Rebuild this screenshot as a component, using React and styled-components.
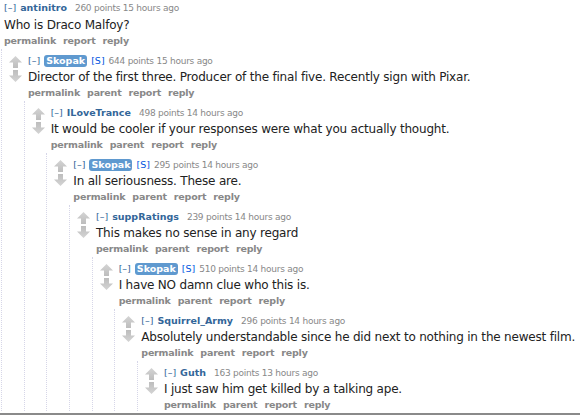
import React from "react";
import styled, { createGlobalStyle } from "styled-components";

const Global = createGlobalStyle`
  html, body { margin: 0; padding: 0; background: #fff; }
  body { width: 580px; height: 415px; overflow: hidden; font-family: "DejaVu Sans", Verdana, sans-serif; }
`;

const Page = styled.div`
  width: 580px;
  height: 415px;
  box-sizing: border-box;
  border-bottom: 2px solid #8a8a8a;
  overflow: hidden;
`;

const Frame = styled.div`
  height: 412px;
  overflow: hidden;
`;

const CommentBox = styled.div`
  padding-top: ${(p) => (p.$root ? "0" : "4px")};
  margin-left: ${(p) => (p.$root ? "0" : p.$first ? "1px" : "21.67px")};
  border-left: ${(p) => (p.$root ? "none" : "1px dotted #d6d6e8")};
`;

const Entry = styled.div`
  display: flex;
  align-items: flex-start;
  padding-left: ${(p) => (p.$root ? "4px" : "0")};
`;

const Votes = styled.div`
  width: 25px;
  flex: none;
  display: flex;
  flex-direction: column;
  align-items: center;
  gap: 2px;
  padding-top: 3px;
  padding-left: 1px;
`;

const Body = styled.div`
  flex: 1;
  min-width: 0;
`;

const Tagline = styled.div`
  font-size: 9.5px;
  line-height: 16px;
  height: 16px;
  color: #888;
  white-space: nowrap;
  display: flex;
  align-items: center;
`;

const Collapse = styled.span`
  color: #369;
  margin-right: 4px;
`;

const Author = styled.span`
  color: ${(p) => (p.$op ? "#fff" : "#369")};
  font-weight: bold;
  background: ${(p) => (p.$op ? "#5f99cf" : "transparent")};
  border-radius: 3px;
  padding: ${(p) => (p.$op ? "0 2px" : "0")};
  line-height: 12px;
  margin-right: ${(p) => (p.$op ? "4px" : "8px")};
`;

const Flair = styled.span`
  color: #0055df;
  margin-right: 4px;
`;

const Meta = styled.span`
  color: #888;
  font-size: 9px;
  letter-spacing: -0.25px;
`;

const Text = styled.div`
  font-size: 12px;
  line-height: 16px;
  height: 16px;
  margin-top: ${(p) => (p.$root ? "1px" : "0")};
  color: #222;
  white-space: nowrap;
  letter-spacing: -0.2px;
`;

const Buttons = styled.div`
  display: flex;
  gap: 7px;
  font-size: 9.5px;
  font-weight: bold;
  line-height: 16px;
  height: 16px;
  color: #888;
  letter-spacing: -0.2px;
`;

const Children = styled.div``;

const Arrow = ({ down }) => (
  <svg width="13" height="12" viewBox="0 0 13 12" style={{ display: "block", transform: down ? "rotate(180deg)" : "none" }}>
    <defs>
      <linearGradient id={down ? "gd" : "gu"} x1="0" y1="0" x2="0" y2="1">
        <stop offset="0" stopColor="#d4d4d4" />
        <stop offset="1" stopColor="#bdbdbd" />
      </linearGradient>
    </defs>
    <path d="M6.5 0 L13 6.5 L9 6.5 L9 12 L4 12 L4 6.5 L0 6.5 Z" fill={`url(#${down ? "gd" : "gu"})`} />
  </svg>
);

const comments = [
  { author: "antinitro", points: 260, time: "15 hours ago", text: "Who is Draco Malfoy?", root: true },
  { author: "Skopak", op: true, points: 644, time: "15 hours ago", text: "Director of the first three. Producer of the final five. Recently sign with Pixar." },
  { author: "ILoveTrance", points: 498, time: "14 hours ago", text: "It would be cooler if your responses were what you actually thought." },
  { author: "Skopak", op: true, points: 295, time: "14 hours ago", text: "In all seriousness. These are." },
  { author: "suppRatings", points: 239, time: "14 hours ago", text: "This makes no sense in any regard" },
  { author: "Skopak", op: true, points: 510, time: "14 hours ago", text: "I have NO damn clue who this is." },
  { author: "Squirrel_Army", points: 296, time: "14 hours ago", text: "Absolutely understandable since he did next to nothing in the newest film." },
  { author: "Guth", points: 163, time: "13 hours ago", text: "I just saw him get killed by a talking ape." },
];

function Comment({ index }) {
  const c = comments[index];
  if (!c) return null;
  const root = !!c.root;
  return (
    <CommentBox $root={root} $first={index === 1}>
      <Entry $root={root}>
        {!root && (
          <Votes>
            <Arrow />
            <Arrow down />
          </Votes>
        )}
        <Body>
          <Tagline>
            <Collapse>[–]</Collapse>
            <Author $op={c.op}>{c.author}</Author>
            {c.op && <Flair>[S]</Flair>}
            <Meta>{c.points} points {c.time}</Meta>
          </Tagline>
          <Text $root={root}>{c.text}</Text>
          <Buttons>
            <span>permalink</span>
            {!root && <span>parent</span>}
            <span>report</span>
            <span>reply</span>
          </Buttons>
        </Body>
      </Entry>
      <Children>
        <Comment index={index + 1} />
      </Children>
    </CommentBox>
  );
}

export default function App() {
  return (
    <Page>
      <Global />
      <Frame>
        <Comment index={0} />
      </Frame>
    </Page>
  );
}
